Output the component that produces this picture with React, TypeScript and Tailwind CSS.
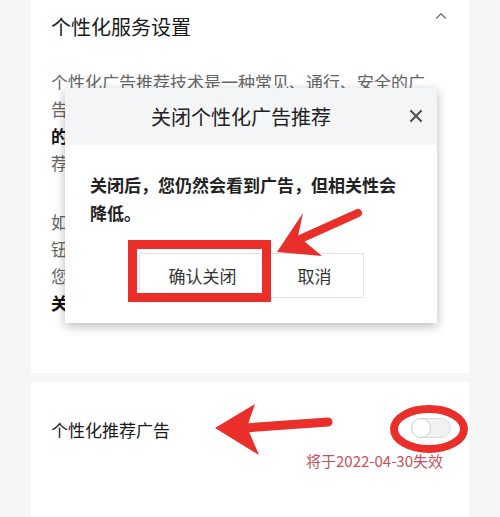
import { X, ChevronUp } from "lucide-react";

const font = { fontFamily: '"Noto Sans CJK SC", "Noto Sans", sans-serif' };

const Annotations = () => (
  <svg
    className="absolute inset-0 pointer-events-none"
    width="500"
    height="517"
    viewBox="0 0 500 517"
  >
    {/* box round the confirm button */}
    <rect x="132.5" y="244.5" width="134" height="53" fill="none" stroke="#ea2e2a" strokeWidth="9" />
    {/* arrow to the confirm button */}
    <line x1="298" y1="240" x2="358" y2="213" stroke="#ea2e2a" strokeWidth="8" strokeLinecap="round" />
    <polygon points="277,252 303,213 298,236 322,256" fill="#ea2e2a" />
    {/* arrow to the row label */}
    <line x1="244" y1="428" x2="328" y2="422" stroke="#ea2e2a" strokeWidth="9" strokeLinecap="round" />
    <polygon points="215,428 255,404 247,427 259,455" fill="#ea2e2a" />
    {/* ring round the switch */}
    <ellipse cx="429" cy="429" rx="35" ry="20" fill="none" stroke="#ea2e2a" strokeWidth="8" />
  </svg>
);

export default function App() {
  return (
    <div className="relative w-[500px] h-[517px] overflow-hidden bg-[#f6f6f6]" style={font}>
      {/* Settings card */}
      <div className="ml-[31px] w-[438px] h-[373px] bg-white pl-5 pr-[20px] pt-[13px]">
        <div className="flex items-start justify-between">
          <h1 className="text-[20px] leading-[28px] text-[#1a1a1a]">个性化服务设置</h1>
          <ChevronUp size={18} strokeWidth={1.5} className="text-[#666] -mt-[6px] mr-[-1px]" />
        </div>
        <div className="mt-[27px] text-[17px] leading-[27px] text-[#666] w-[376px] whitespace-nowrap">
          <p>
            个性化广告推荐技术是一种常见、通行、安全的广
            <br />
            告技术，会根据您的偏好为您展示更符合您需求
            <br />
            <b className="text-[#111]">的广告，不会泄露您的个人身份信息。</b>为您推
            <br />
            荐更好的商品和服务。
          </p>
          <p className="mt-[32px]">
            如您不希望看到个性化推荐广告，可以点击下方按
            <br />
            钮关闭。关闭后，该设置将在六个月内有效，届时
            <br />
            您可以再次选择是否开启。
            <br />
            <b className="text-[#111]">关闭后，您仍然会看到广告，但相关性会降低。</b>
          </p>
        </div>
      </div>

      {/* Switch card */}
      <div className="ml-[31px] mt-[9px] w-[438px] h-[200px] bg-white pl-5 pr-[18px] pt-[36px] flex items-start justify-between">
        <span className="text-[17px] leading-[24px] text-[#1a1a1a]">个性化推荐广告</span>
        <div className="flex flex-col items-end">
          <div className="relative w-[40px] h-[20px] rounded-full bg-[#f0f1f3] border border-[#dcdee2]">
            <div className="absolute -left-px -top-px w-[20px] h-[20px] rounded-full bg-white border border-[#cfd2d6]" />
          </div>
          <span className="mt-[13px] mr-2 text-[15px] leading-[20px] text-[#c8505a]">将于2022-04-30失效</span>
        </div>
      </div>

      {/* Confirm dialog */}
      <div className="absolute left-[65px] top-[88px] w-[372px] h-[235px] bg-white shadow-[0_3px_10px_rgba(0,0,0,0.28)]">
        <div className="relative h-[57px] bg-[#f4f5f7] flex items-center justify-center pr-5">
          <span className="text-[20px] text-[#222]">关闭个性化广告推荐</span>
          <X size={20} strokeWidth={2.6} className="absolute right-[11px] top-[18px] text-[#555]" />
        </div>
        <div className="px-[25px] pt-[26px]">
          <p className="text-[17px] leading-[28px] font-bold text-[#222]">
            关闭后，您仍然会看到广告，但相关性会
            <br />
            降低。
          </p>
          <div className="mt-[26px] flex justify-center">
            <button className="w-[128px] h-[45px] bg-white border border-[#e3e3e3] text-[17px] text-[#333]">
              确认关闭
            </button>
            <button className="w-[97px] h-[45px] bg-white border border-l-0 border-[#e3e3e3] text-[17px] text-[#333]">
              取消
            </button>
          </div>
        </div>
      </div>

      <Annotations />
    </div>
  );
}
